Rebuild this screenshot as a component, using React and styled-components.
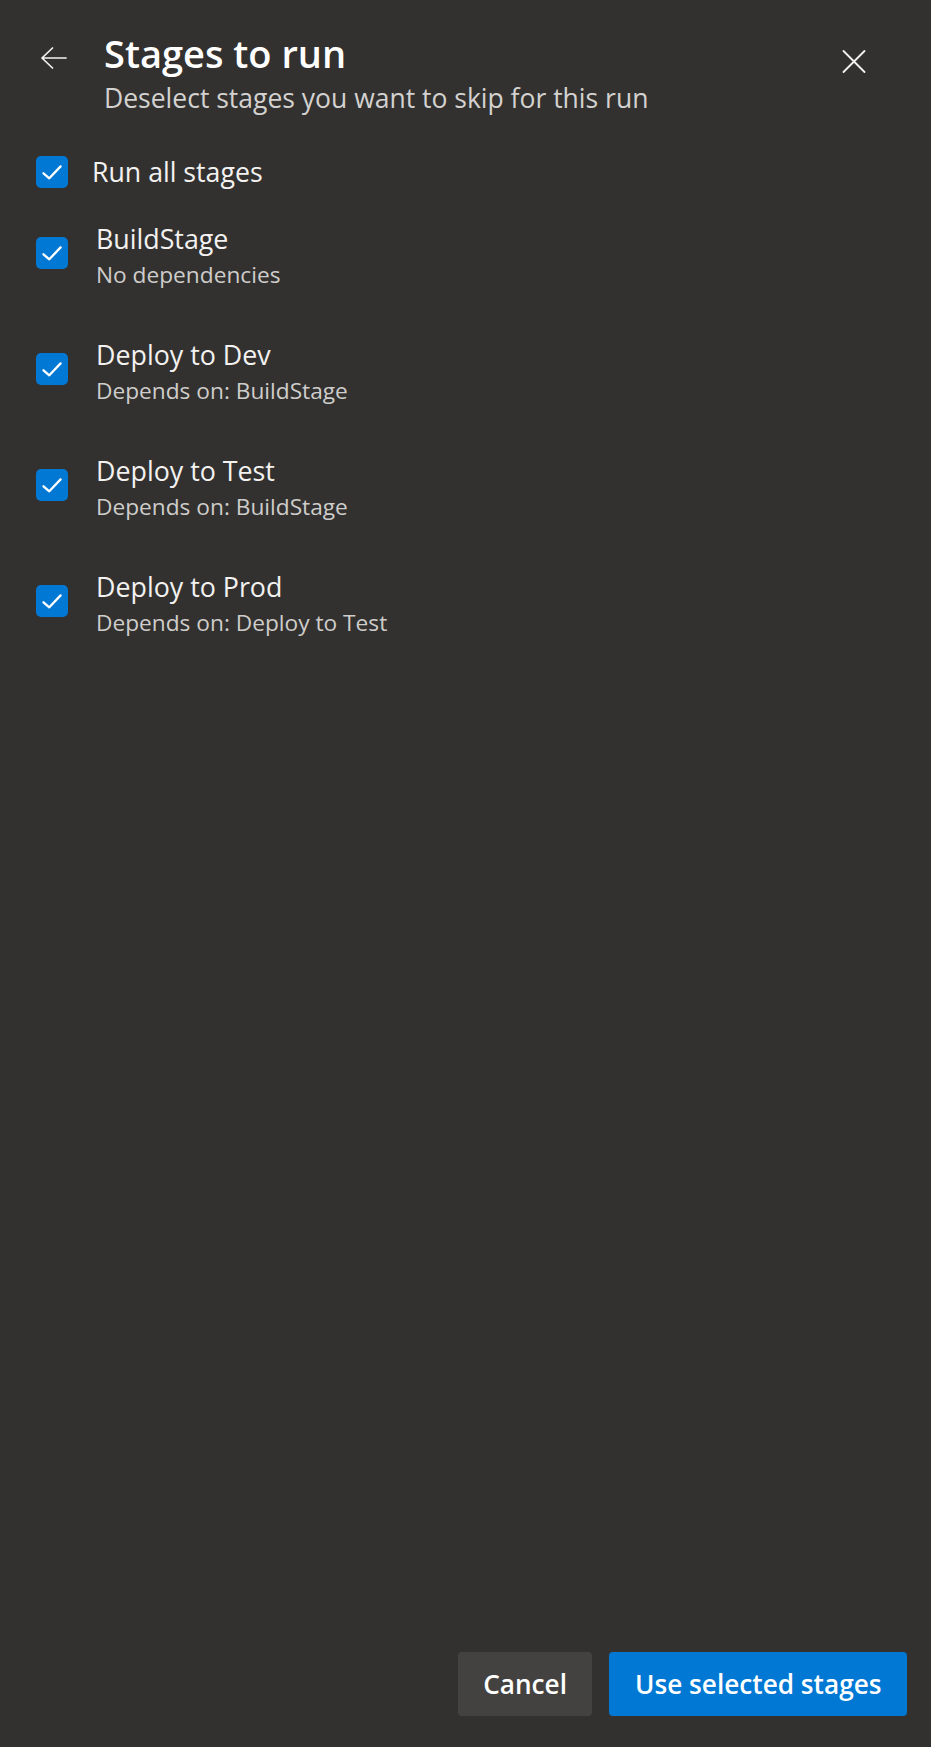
import React, { useState } from "react";
import styled, { createGlobalStyle } from "styled-components";

const GlobalStyle = createGlobalStyle`
  html, body {
    margin: 0;
    padding: 0;
    background: #ffffff;
  }
  body {
    font-family: "Open Sans", "Noto Sans", "Liberation Sans", sans-serif;
  }
  * { box-sizing: border-box; }
`;

const Panel = styled.div`
  width: 931px;
  height: 1747px;
  background: #32312f;
  display: flex;
  flex-direction: column;
  color: #f3f2f1;
`;

const Header = styled.header`
  display: flex;
  align-items: flex-start;
  padding: 28px 65px 0 41px;
`;

const IconButton = styled.button`
  border: none;
  background: transparent;
  padding: 0;
  margin: ${(p) => p.$mt}px 0 0 0;
  color: #f3f2f1;
  display: flex;
  cursor: pointer;
`;

const TitleBlock = styled.div`
  flex: 1;
  margin-left: 37px;
`;

const Title = styled.h1`
  margin: 0;
  font-size: 38px;
  line-height: 50px;
  font-weight: 600;
  color: #ffffff;
`;

const Subtitle = styled.div`
  margin-top: 2px;
  font-size: 26.5px;
  line-height: 36px;
  color: #d4d2d0;
`;

const Content = styled.div`
  padding: 40px 36px 0 36px;
  display: flex;
  flex-direction: column;
`;

const RunAllRow = styled.label`
  display: flex;
  align-items: center;
  gap: 24px;
  cursor: pointer;
`;

const StageRow = styled.label`
  display: flex;
  align-items: flex-start;
  gap: 28px;
  margin-top: ${(p) => p.$mt}px;
  cursor: pointer;
`;

const Box = styled.span`
  width: 32px;
  height: 32px;
  flex: none;
  margin-top: ${(p) => p.$mt || 0}px;
  border-radius: 5px;
  background: ${(p) => (p.$on ? "#0078d4" : "transparent")};
  border: ${(p) => (p.$on ? "none" : "2px solid #c8c6c4")};
  display: flex;
  align-items: center;
  justify-content: center;
`;

const RunAllLabel = styled.span`
  font-size: 26.7px;
  line-height: 32px;
  color: #f3f2f1;
`;

const StageText = styled.div`
  display: flex;
  flex-direction: column;
`;

const StageName = styled.span`
  font-size: 26.8px;
  line-height: 37px;
  color: #f3f2f1;
`;

const StageDesc = styled.span`
  margin-top: 2px;
  font-size: 22.7px;
  line-height: 31px;
  color: #cfcdcb;
`;

const Footer = styled.footer`
  margin-top: auto;
  display: flex;
  justify-content: flex-end;
  gap: 17px;
  padding: 0 24px 31px 0;
`;

const Button = styled.button`
  height: 64px;
  padding: 0 25.5px;
  border: none;
  border-radius: 4px;
  font-family: inherit;
  font-size: 26.2px;
  font-weight: 600;
  color: #ffffff;
  background: ${(p) => (p.$primary ? "#0078d4" : "#434241")};
  cursor: pointer;
`;

const Check = () => (
  <svg width="32" height="32" viewBox="0 0 32 32" fill="none">
    <path
      d="M7.5 17.3 L13.3 22.3 L24.6 10.4"
      stroke="#ffffff"
      strokeWidth="2.3"
      strokeLinecap="round"
      strokeLinejoin="round"
    />
  </svg>
);

const Checkbox = ({ on, mt }) => (
  <Box $on={on} $mt={mt}>
    {on && <Check />}
  </Box>
);

const BackArrow = () => (
  <svg width="26" height="22" viewBox="0 0 26 22" fill="none">
    <path
      d="M1 11 H25 M1 11 L11.5 1 M1 11 L11.5 21"
      stroke="currentColor"
      strokeWidth="1.7"
      strokeLinecap="round"
    />
  </svg>
);

const CloseX = () => (
  <svg width="24" height="23" viewBox="0 0 24 23" fill="none">
    <path
      d="M1.5 1 L22.5 22 M22.5 1 L1.5 22"
      stroke="currentColor"
      strokeWidth="1.8"
      strokeLinecap="round"
    />
  </svg>
);

const stages = [
  { name: "BuildStage", desc: "No dependencies" },
  { name: "Deploy to Dev", desc: "Depends on: BuildStage" },
  { name: "Deploy to Test", desc: "Depends on: BuildStage" },
  { name: "Deploy to Prod", desc: "Depends on: Deploy to Test" },
];

export default function App() {
  const [checked] = useState(stages.map(() => true));
  return (
    <>
      <GlobalStyle />
      <Panel>
        <Header>
          <IconButton $mt={19} aria-label="Back">
            <BackArrow />
          </IconButton>
          <TitleBlock>
            <Title>Stages to run</Title>
            <Subtitle>Deselect stages you want to skip for this run</Subtitle>
          </TitleBlock>
          <IconButton $mt={22} aria-label="Close">
            <CloseX />
          </IconButton>
        </Header>
        <Content>
          <RunAllRow>
            <Checkbox on />
            <RunAllLabel>Run all stages</RunAllLabel>
          </RunAllRow>
          {stages.map((s, i) => (
            <StageRow key={s.name} $mt={i === 0 ? 32 : 46}>
              <Checkbox on={checked[i]} mt={17} />
              <StageText>
                <StageName>{s.name}</StageName>
                <StageDesc>{s.desc}</StageDesc>
              </StageText>
            </StageRow>
          ))}
        </Content>
        <Footer>
          <Button>Cancel</Button>
          <Button $primary>Use selected stages</Button>
        </Footer>
      </Panel>
    </>
  );
}
